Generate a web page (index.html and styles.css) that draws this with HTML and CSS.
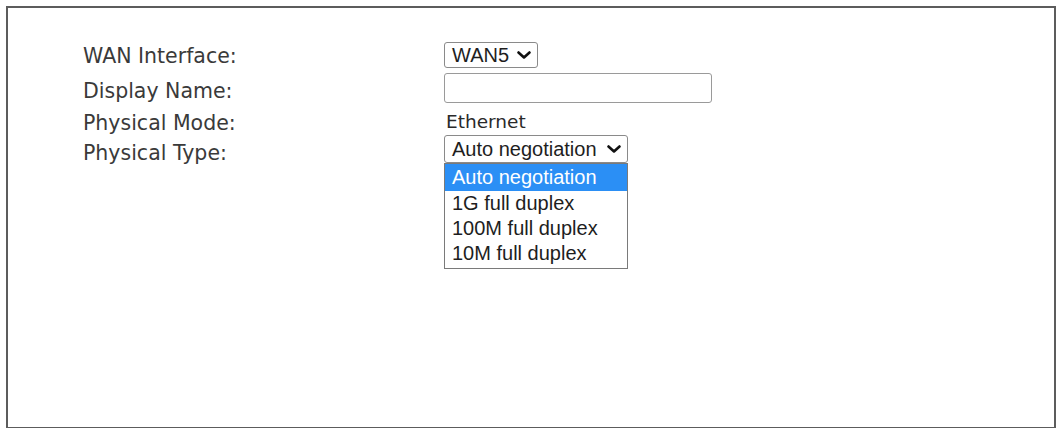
FILE: index.html
```html
<!DOCTYPE html>
<html lang="en">
<head>
<meta charset="utf-8">
<title>WAN Interface</title>
<link rel="stylesheet" href="styles.css">
</head>
<body>
<div class="panel">
  <div class="form">
    <div class="label">WAN Interface:</div>
    <div class="field">
      <div class="select select-wan" role="combobox">
        <span class="select-value">WAN5</span>
        <svg class="chev" width="14" height="8" viewBox="0 0 14 8"><path d="M1.5 1.5 L7 6.5 L12.5 1.5" fill="none" stroke="#111" stroke-width="2.6" stroke-linecap="round" stroke-linejoin="round"/></svg>
      </div>
    </div>

    <div class="label">Display Name:</div>
    <div class="field">
      <input class="text-input" type="text" value="">
    </div>

    <div class="label">Physical Mode:</div>
    <div class="field">
      <span class="static">Ethernet</span>
    </div>

    <div class="label label-last">Physical Type:</div>
    <div class="field">
      <div class="select-wrap">
        <div class="select select-type" role="combobox" aria-expanded="true">
          <span class="select-value">Auto negotiation</span>
          <svg class="chev" width="14" height="8" viewBox="0 0 14 8"><path d="M1.5 1.5 L7 6.5 L12.5 1.5" fill="none" stroke="#111" stroke-width="2.6" stroke-linecap="round" stroke-linejoin="round"/></svg>
        </div>
        <ul class="dropdown" role="listbox">
          <li class="option selected">Auto negotiation</li>
          <li class="option">1G full duplex</li>
          <li class="option">100M full duplex</li>
          <li class="option">10M full duplex</li>
        </ul>
      </div>
    </div>
  </div>
</div>
</body>
</html>
```

FILE: styles.css
```css
html, body {
  margin: 0;
  padding: 0;
  background: #ffffff;
}

body {
  padding: 6px 3px 0 6px;
  overflow: hidden;
}

.panel {
  box-sizing: border-box;
  width: 1050px;
  height: 423px;
  border: 2px solid #5c5c5c;
  background: #ffffff;
}

.form {
  display: grid;
  grid-template-columns: 361px auto;
  grid-template-rows: 31px 35px 32px 28px;
  align-items: end;
  padding: 29px 0 0 75px;
}

.label {
  font-family: "DejaVu Sans", Verdana, sans-serif;
  font-size: 20.5px;
  color: #3a3a3a;
  line-height: normal;
}

.label-last {
  margin-bottom: -2px;
}

.field {
  display: flex;
  align-items: flex-end;
}

.select {
  box-sizing: border-box;
  display: flex;
  align-items: center;
  justify-content: space-between;
  border: 1px solid #8a8a8a;
  border-radius: 3px;
  background: #ffffff;
  font-family: "Liberation Sans", Arial, sans-serif;
  font-size: 20px;
  color: #1e1e1e;
  padding: 0 6px 0 7px;
}

.select-wan {
  width: 94px;
  height: 26px;
}

.select-type {
  width: 184px;
  height: 28px;
}

.chev {
  display: block;
  flex: none;
}

.text-input {
  box-sizing: border-box;
  width: 268px;
  height: 30px;
  margin: 0;
  border: 1px solid #9a9a9a;
  border-radius: 3px;
  background: #ffffff;
  font-family: "Liberation Sans", Arial, sans-serif;
  font-size: 18px;
  padding: 0 6px;
}

.static {
  font-family: "DejaVu Sans", Verdana, sans-serif;
  font-size: 18.5px;
  color: #2a2a2a;
  margin-bottom: 3px;
  margin-left: 2px;
}

.select-wrap {
  position: relative;
}

.dropdown {
  position: absolute;
  left: 0;
  top: 100%;
  box-sizing: border-box;
  width: 184px;
  margin: 0;
  padding: 0 0 2px 0;
  list-style: none;
  border: 1px solid #7a7a7a;
  background: #ffffff;
}

.option {
  height: 25px;
  line-height: 25px;
  padding: 0 0 0 7px;
  font-family: "Liberation Sans", Arial, sans-serif;
  font-size: 20px;
  color: #1e1e1e;
  white-space: nowrap;
}

.option.selected {
  background: #2b8ff5;
  color: #ffffff;
  height: 27px;
  line-height: 27px;
}
```
